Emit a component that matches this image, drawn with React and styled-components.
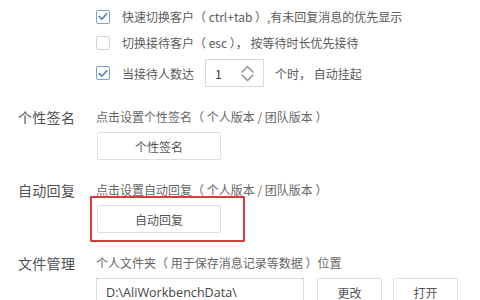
import React from "react";
import styled, { createGlobalStyle } from "styled-components";

const Global = createGlobalStyle`
  html, body { margin: 0; padding: 0; background: #fff; }
  body { font-family: "Noto Sans CJK SC", "Noto Sans", sans-serif; color: #555; }
`;

const Page = styled.div`
  width: 480px;
  height: 300px;
  overflow: hidden;
  padding: 6px 0 0 18px;
  box-sizing: border-box;
  display: flex;
  flex-direction: column;
  gap: 20px;
`;

const Options = styled.div`
  display: flex;
  flex-direction: column;
  gap: 5px;
  padding-left: 78px;
`;

const OptionRow = styled.label`
  display: flex;
  align-items: center;
  height: ${(p) => (p.$tall ? "28px" : "21px")};
  margin-top: ${(p) => (p.$tall ? "1px" : "0")};
  font-size: 12px;
  color: #5a5a5a;
  white-space: pre;
`;

const Box = styled.span`
  width: 14px;
  height: 14px;
  box-sizing: border-box;
  border: 1px solid ${(p) => (p.$checked ? "#7f9fc8" : "#d4d4d4")};
  border-radius: 2px;
  background: #fff;
  margin-right: 12px;
  display: flex;
  align-items: center;
  justify-content: center;
`;

const Spinner = styled.div`
  width: 59px;
  height: 28px;
  box-sizing: border-box;
  border: 1px solid #d9d9d9;
  margin: 0 11px 0 11px;
  display: flex;
  align-items: center;
  justify-content: space-between;
  padding: 0 8px 0 9px;
  font-size: 12.5px;
  color: #444;
`;

const Section = styled.div`
  display: grid;
  grid-template-columns: 78px 1fr;
  row-gap: 5px;
`;

const Label = styled.div`
  font-size: 14px;
  line-height: 20px;
  color: #4f4f4f;
  letter-spacing: 0.3px;
`;

const Desc = styled.div`
  font-size: 12px;
  line-height: 20px;
  color: #666;
  white-space: pre;
`;

const Controls = styled.div`
  grid-column: 2;
  display: flex;
  align-items: center;
`;

const Button = styled.button`
  width: ${(p) => p.$w || 124}px;
  height: 28px;
  box-sizing: border-box;
  margin-left: ${(p) => p.$ml || 1}px;
  border: 1px solid #dedede;
  border-radius: 2px;
  background: #fff;
  font-family: inherit;
  font-size: 12px;
  color: #555;
  padding: 0;
`;

const Highlight = styled.div`
  position: relative;
  display: inline-flex;
  &::after {
    content: "";
    position: absolute;
    left: -6px;
    top: -9px;
    width: 155px;
    height: 46px;
    border: 2px solid #dc3b3b;
    box-sizing: border-box;
    border-radius: 1px;
    pointer-events: none;
  }
`;

const PathInput = styled.div`
  width: 208px;
  height: 28px;
  box-sizing: border-box;
  border: 1px solid #d9d9d9;
  font-size: 12.6px;
  color: #444;
  display: flex;
  align-items: center;
  padding-left: 9px;
  font-family: "Open Sans", "Noto Sans", sans-serif;
`;

const Check = ({ checked }) => (
  <Box $checked={checked}>
    {checked && (
      <svg width="10" height="9" viewBox="0 0 10 9">
        <path d="M1.2 4.6 L3.9 7.2 L8.8 1.6" fill="none" stroke="#5b82b5" strokeWidth="1.6" strokeLinecap="round" strokeLinejoin="round" />
      </svg>
    )}
  </Box>
);

const Chevrons = () => (
  <svg width="15" height="19" viewBox="0 0 15 19">
    <path d="M2 8 L7.5 2.5 L13 8 M2 11 L7.5 16.5 L13 11" fill="none" stroke="#909090" strokeWidth="1.5" strokeLinecap="round" strokeLinejoin="round" />
  </svg>
);

export default function App() {
  return (
    <>
      <Global />
      <Page>
        <Options>
          <OptionRow>
            <Check checked />
            快速切换客户（ ctrl+tab ）,有未回复消息的优先显示
          </OptionRow>
          <OptionRow>
            <Check />
            切换接待客户（ esc ）， 按等待时长优先接待
          </OptionRow>
          <OptionRow $tall>
            <Check checked />
            当接待人数达
            <Spinner>
              <span>1</span>
              <Chevrons />
            </Spinner>
            个时， 自动挂起
          </OptionRow>
        </Options>

        <Section>
          <Label>个性签名</Label>
          <Desc>点击设置个性签名（ 个人版本 / 团队版本 ）</Desc>
          <Controls>
            <Button>个性签名</Button>
          </Controls>
        </Section>

        <Section>
          <Label>自动回复</Label>
          <Desc>点击设置自动回复（ 个人版本 / 团队版本 ）</Desc>
          <Controls>
            <Highlight>
              <Button>自动回复</Button>
            </Highlight>
          </Controls>
        </Section>

        <Section>
          <Label>文件管理</Label>
          <Desc>个人文件夹（ 用于保存消息记录等数据 ）位置</Desc>
          <Controls>
            <PathInput>D:\AliWorkbenchData\</PathInput>
            <Button $w={65} $ml={13}>更改</Button>
            <Button $w={65} $ml={11}>打开</Button>
          </Controls>
        </Section>
      </Page>
    </>
  );
}
